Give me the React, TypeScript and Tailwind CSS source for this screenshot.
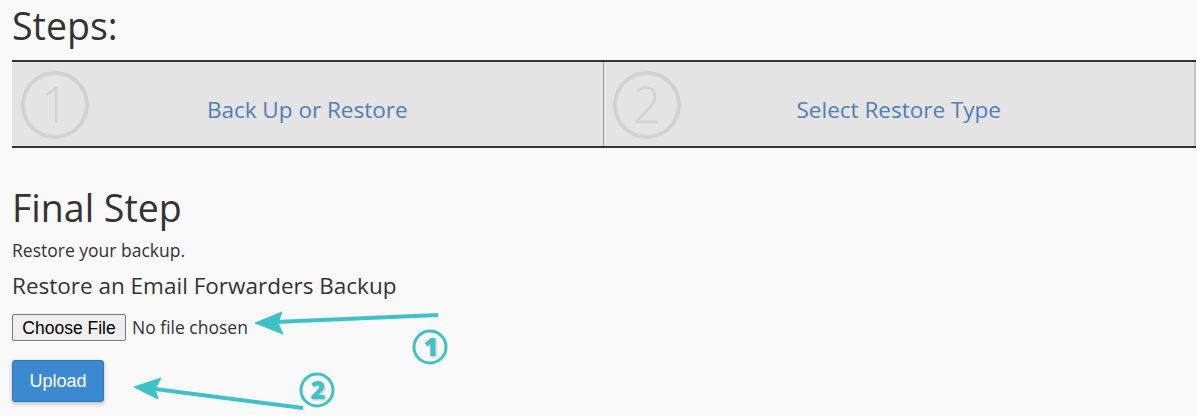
import React from 'react';

const teal = '#3fc1c8';

const StepCircle: React.FC<{ n: string }> = ({ n }) => (
  <svg width="72" height="72" viewBox="0 0 72 72" className="shrink-0">
    <circle cx="36" cy="36" r="32" fill="none" stroke="#d2d2d2" strokeWidth="4" />
    <text x="36" y="54" textAnchor="middle" fontSize="50" fontFamily="'Open Sans', sans-serif" fontWeight="300" fill="#d2d2d2">
      {n}
    </text>
  </svg>
);

const Step: React.FC<{ n: string; label: string; last?: boolean }> = ({ n, label, last }) => (
  <div className={`relative flex-1 flex items-center justify-center h-full ${last ? 'border-r-2 border-r-[#c4c4c4]' : 'border-r border-r-[#9a9a9a]'}`}>
    <div className="absolute left-[7px] top-[7px]">
      <StepCircle n={n} />
    </div>
    <a href="#" className="text-[22.5px] text-[#4e80b6] mt-[12px]">{label}</a>
  </div>
);

const Badge: React.FC<{ n: string }> = ({ n }) => (
  <svg width="40" height="40" viewBox="0 0 40 40" className="absolute overflow-visible">
    <circle cx="20" cy="20" r="16" fill="none" stroke={teal} strokeWidth="3" />
    <text x="21" y="29" textAnchor="middle" fontSize="25" fontWeight="800" fontFamily="'Open Sans', sans-serif" fill={teal} style={{ filter: 'drop-shadow(1px 1px 1px rgba(0,0,0,0.25))' }}>
      {n}
    </text>
  </svg>
);

export default function App() {
  return (
    <div className="w-[1197px] h-[416px] bg-[#f9f9f9] text-[#333] pl-[12px] overflow-hidden relative" style={{ fontFamily: "'Open Sans', sans-serif" }}>
      <h2 className="text-[37.5px] leading-[50px] pt-[1px]">Steps:</h2>
      <div className="flex h-[88px] mt-[9px] mr-[1px] bg-[#e4e4e4] border-y-2 border-y-[#333]">
        <Step n="1" label="Back Up or Restore" />
        <Step n="2" label="Select Restore Type" last />
      </div>
      <h2 className="text-[37.5px] leading-[50px] mt-[35px]">Final Step</h2>
      <p className="text-[17.5px] leading-[22px] mt-[6px]">Restore your backup.</p>
      <h3 className="text-[22.5px] leading-[30px] mt-[10px]">Restore an Email Forwarders Backup</h3>
      <div className="flex items-center mt-[12px] h-[28px]">
        <button className="h-[27px] w-[114px] border border-[#767676] rounded-[2px] bg-[#efefef] text-[17.5px] text-black" style={{ fontFamily: "'Liberation Sans', Arial, sans-serif" }}>
          Choose File
        </button>
        <span className="ml-[6px] text-[17.5px] text-[#333]">No file chosen</span>
      </div>
      <button className="mt-[19px] w-[92px] h-[42px] bg-[#3b89d1] text-white text-[18px] rounded-[3px] border border-[#2f79bd] shadow-[0_2px_4px_rgba(0,0,0,0.25)]" style={{ fontFamily: "'Liberation Sans', Arial, sans-serif" }}>
        Upload
      </button>

      <svg className="absolute left-0 top-0 pointer-events-none" width="1197" height="416">
        <g fill={teal} stroke={teal} strokeLinejoin="round">
          <line x1="438" y1="315" x2="275" y2="322" strokeWidth="4" />
          <polygon points="255,323 282,312 278,323 283,334" />
          <line x1="303" y1="408" x2="155" y2="389" strokeWidth="4" />
          <polygon points="134,387 161,378 155,389 158,399" />
        </g>
      </svg>
      <div className="absolute left-[410px] top-[327px]"><Badge n="1" /></div>
      <div className="absolute left-[297px] top-[370px]"><Badge n="2" /></div>
    </div>
  );
}
